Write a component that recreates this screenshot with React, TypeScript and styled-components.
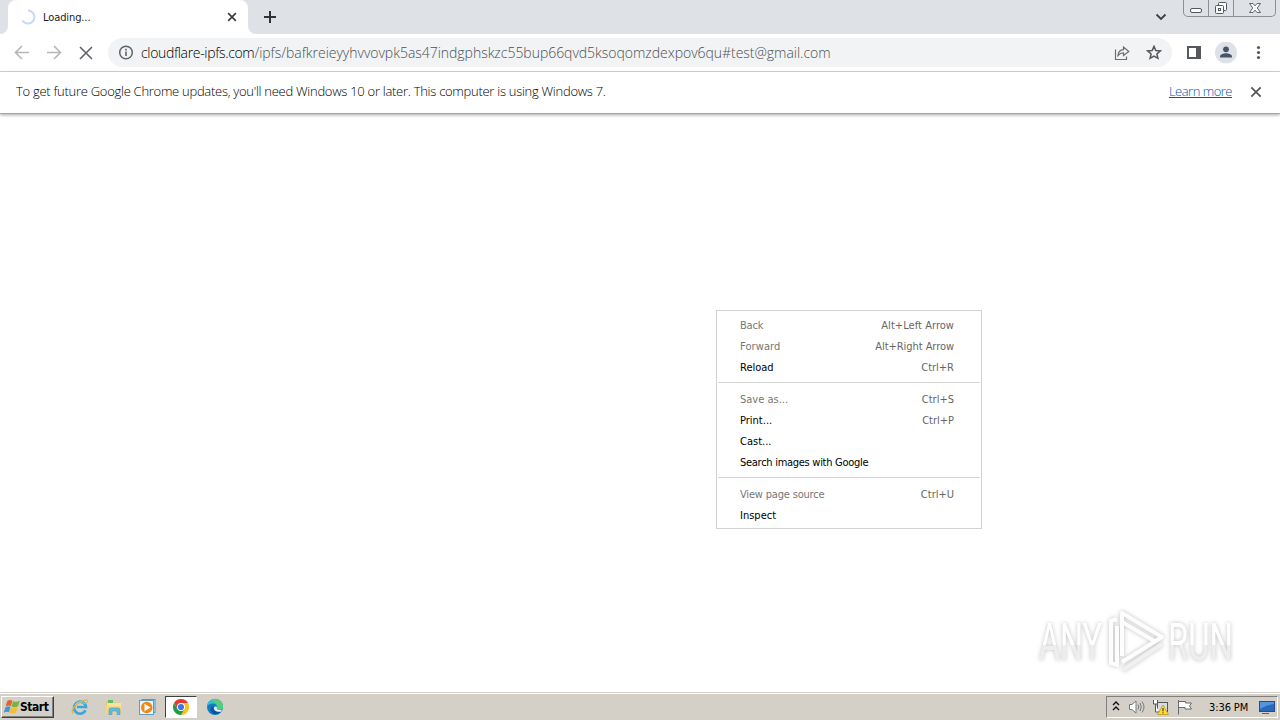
import styled, {createGlobalStyle} from 'styled-components'

const GlobalStyle = createGlobalStyle`
    * {
        box-sizing: border-box;
    }
    body {
        margin: 0;
        background: #ffffff;
        overflow: hidden;
        font-family: 'DejaVu Sans Condensed', 'DejaVu Sans', Tahoma, sans-serif;
        font-size: 11px;
        color: #202124;
    }
    svg {
        display: block;
        flex: none;
    }
`
const Screen = styled.div`
    width: 1280px;
    height: 720px;
    display: flex;
    flex-direction: column;
    overflow: hidden;
`
const Text = styled.span<{$spacing?: number}>`
    white-space: pre;
    letter-spacing: ${({$spacing}) => $spacing ?? 0}px;
`

/* browser frame */
const TabStrip = styled.div`
    height: 34px;
    flex: none;
    display: flex;
    background: #dee1e6;
`
const TabEdge = styled.div<{$side: 'left' | 'right'}>`
    width: 8px;
    background: #ffffff;
    &::before {
        content: '';
        display: block;
        height: 34px;
        background: #dee1e6;
        border-bottom-${({$side}) => ($side === 'left' ? 'right' : 'left')}-radius: 8px;
    }
`
const TabSlot = styled.div`
    width: 240px;
    display: flex;
    background: #dee1e6;
`
const Tab = styled.div`
    width: 240px;
    padding: 0 9px 0 12px;
    display: flex;
    align-items: center;
    background: #ffffff;
    border-radius: 8px 8px 0 0;
`
const TabTitle = styled(Text)`
    flex: 1;
    margin-left: 7px;
`
const NewTab = styled.div`
    margin: 10px 0 0 8px;
`
const WindowTools = styled.div`
    margin-left: auto;
    padding-right: 4px;
    display: flex;
`
const TabSearch = styled.div`
    margin: 11px 16px 0 0;
`
const Caption = styled.div`
    width: 93px;
    height: 17px;
    display: flex;
    border: 1px solid #8c8f94;
    border-top: 0;
    border-radius: 0 0 5px 5px;
`
const CaptionButton = styled.div<{$width: number}>`
    width: ${({$width}) => $width}px;
    display: flex;
    justify-content: center;
    border-right: 1px solid #8c8f94;
    &:last-child {
        border-right: 0;
    }
`
const Toolbar = styled.div`
    height: 38px;
    flex: none;
    display: flex;
    align-items: center;
    padding: 0 12px 0 14px;
    border-bottom: 1px solid #d5d7da;
`
const NavButtons = styled.div`
    width: 94px;
    display: flex;
    gap: 16px;
`
const AddressBar = styled.div`
    width: 1064px;
    height: 29px;
    padding: 0 10px;
    display: flex;
    align-items: center;
    border-radius: 15px;
    background: #f1f3f4;
`
const Url = styled.div`
    flex: 1;
    margin-left: 7px;
    padding-top: 1px;
    font-family: 'Open Sans', 'Noto Sans', sans-serif;
    font-size: 14px;
    line-height: 20px;
    color: #4b4f54;
    font-weight: 300;
`
const Host = styled(Text)`
    color: #000000;
`
const AddressActions = styled.div`
    display: flex;
    gap: 16px;
`
const Profile = styled.div`
    display: flex;
    align-items: center;
    margin-left: 14px;
    gap: 13px;
`
const InfoBar = styled.div`
    height: 42px;
    flex: none;
    display: flex;
    align-items: center;
    padding: 0 18px 2px 16px;
    border-bottom: 1px solid #a5a5a5;
    box-shadow: 0 1px 3px rgba(0, 0, 0, 0.35);
    font-family: 'Open Sans', 'Noto Sans', sans-serif;
    font-size: 13px;
    font-weight: 300;
    color: #000000;
`
const InfoText = styled(Text)`
    padding-bottom: 2px;
`
const LearnMore = styled(InfoText)`
    margin: 0 18px 0 auto;
    color: #0057b0;
    text-decoration: underline;
`
const Page = styled.div`
    flex: 1;
    position: relative;
`

/* context menu */
const Menu = styled.div`
    position: absolute;
    left: 716px;
    top: 196px;
    width: 266px;
    height: 219px;
    padding: 4px 1px;
    border: 1px solid #d2d2d2;
    background: #ffffff;
`
const MenuRow = styled.div<{$disabled?: boolean}>`
    height: 21px;
    padding: 0 26px 0 22px;
    display: flex;
    align-items: center;
    justify-content: space-between;
    color: ${({$disabled}) => ($disabled ? '#767676' : '#000000')};
`
const Shortcut = styled(Text)`
    color: #666666;
`
const Separator = styled.div`
    height: 1px;
    margin: 4px 0 6px;
    background: #d5d5d5;
`
const Watermark = styled.svg`
    position: absolute;
    left: 1020px;
    top: 487px;
    overflow: visible;
    filter: drop-shadow(0 0 2px rgba(0, 0, 0, 0.25));
`

/* taskbar */
const Taskbar = styled.div`
    height: 28px;
    flex: none;
    display: flex;
    align-items: center;
    padding-top: 1px;
    background: #d4d0c8;
    border-top: 1px solid #d4d0c8;
    box-shadow: inset 0 1px 0 #ffffff;
`
const StartButton = styled.div`
    width: 53px;
    height: 22px;
    margin-left: 1px;
    padding-left: 2px;
    display: flex;
    align-items: center;
    border: 1px solid;
    border-color: #ffffff #404040 #404040 #ffffff;
    box-shadow: inset -1px -1px 0 #808080;
    color: #000000;
    font-weight: bold;
    font-size: 12px;
`
const QuickLaunch = styled.div`
    margin-left: 9px;
    display: flex;
    align-items: center;
`
const Launcher = styled.div<{$active?: boolean}>`
    width: ${({$active}) => ($active ? 32 : 34)}px;
    height: 22px;
    display: flex;
    align-items: center;
    justify-content: center;
    border: 1px solid;
    border-color: ${({$active}) => ($active ? '#404040 #ffffff #ffffff #404040' : 'transparent')};
    background: ${({$active}) => ($active ? '#ffffff' : 'transparent')};
    &:last-child {
        margin-left: 1px;
    }
`
const Tray = styled.div`
    width: 172px;
    height: 22px;
    margin: 0 2px 0 auto;
    padding: 0 1px 0 5px;
    display: flex;
    align-items: center;
    border: 1px solid;
    border-color: #808080 #ffffff #ffffff #808080;
    color: #000000;
`
const TrayIcons = styled.div`
    width: 97px;
    display: flex;
    align-items: center;
    gap: 8px;
`
const Clock = styled(Text)`
    width: 50px;
`

type MenuItem = {label: string; spacing?: number; keys?: string; keySpacing?: number; disabled?: boolean}

const MENU: MenuItem[][] = [
    [
        {label: 'Back', spacing: -0.2, keys: 'Alt+Left Arrow', keySpacing: 0.05, disabled: true},
        {label: 'Forward', spacing: 0.1, keys: 'Alt+Right Arrow', keySpacing: -0.05, disabled: true},
        {label: 'Reload', keys: 'Ctrl+R'},
    ],
    [
        {label: 'Save as...', keys: 'Ctrl+S', disabled: true},
        {label: 'Print...', keys: 'Ctrl+P'},
        {label: 'Cast...'},
        {label: 'Search images with Google', spacing: -0.28},
    ],
    [{label: 'View page source', spacing: -0.18, keys: 'Ctrl+U', disabled: true}, {label: 'Inspect'}],
]

const Cross = ({size = 16, reach = 4, color = '#3c4043', width = 1.6}) => (
    <svg width={size} height={size} viewBox="-8 -8 16 16">
        <path d={`M-${reach} -${reach}L${reach} ${reach}M${reach} -${reach}L-${reach} ${reach}`} stroke={color} strokeWidth={width} />
    </svg>
)

const Arrow = ({flip = false}) => (
    <svg width="16" height="16" viewBox="0 0 16 16" fill="none" stroke="#b4b6b9" strokeWidth="1.6">
        <path d={flip ? 'M1 7.5H14M8 1L14.5 7.5L8 14' : 'M15 7.5H2M8 1L1.5 7.5L8 14'} />
    </svg>
)

const InternetExplorer = () => (
    <svg width="18" height="18" viewBox="0 0 18 18" fill="none">
        <path d="M14.5 12.2A6 6 0 1 1 15 9H6" stroke="#3ca6dc" strokeWidth="2.6" />
        <path d="M4 7C6 3.3 11 2.5 14 6" stroke="#8ed6f4" strokeWidth="1" />
        <path d="M2 15.5C-1 12.5 5 5.5 12 2.5C15.5 1 17.5 2 15.8 5" stroke="#e5b53a" strokeWidth="1.3" />
    </svg>
)

const Explorer = () => (
    <svg width="18" height="18" viewBox="0 0 18 18">
        <path d="M1 3H6L7 4.5H15V14H1Z" fill="#e6c766" />
        <path d="M3 2H8V5H3Z" fill="#65b96b" />
        <path d="M2 5H16V12H2Z" fill="#f7e4a0" />
        <path d="M1 8H15L16 10V15H1Z" fill="#f3d77c" />
        <path d="M4 16.5V11.5C4 10.5 5 10 6 10H13C14.5 10 15 11 15 12V16.5H12V13H7V16.5Z" fill="#65b8df" stroke="#459bca" strokeWidth=".6" />
    </svg>
)

const MediaPlayer = () => (
    <svg width="18" height="18" viewBox="0 0 18 18">
        <rect x="3" y="1.5" width="13" height="13" fill="#c5e5f4" stroke="#519ac1" />
        <rect x=".5" y="2.5" width="14" height="14" fill="#eaf5fb" stroke="#5c9ec5" />
        <circle cx="7.7" cy="9.5" r="5.7" fill="#f28718" />
        <path d="M5.5 5.8L11.5 9.5L5.5 13.2Z" fill="#ffffff" />
    </svg>
)

const Chrome = () => (
    <svg width="16" height="16" viewBox="-8 -8 16 16">
        <path d="M0 0L-6.93 -4A8 8 0 0 1 6.93 -4Z" fill="#e33b2e" />
        <path d="M0 0V-4H6.93A8 8 0 0 1 0 8Z" fill="#fbc116" />
        <path d="M0 0L3.46 2L0 8A8 8 0 0 1 -6.93 -4L-3.46 2Z" fill="#229b49" />
        <path d="M-6.93 -4L-3.46 2L0 0V-4Z" fill="#e33b2e" />
        <circle r="4" fill="#ffffff" />
        <circle r="3.1" fill="#3979e8" />
    </svg>
)

const Edge = () => (
    <svg width="18" height="18" viewBox="0 0 18 18">
        <circle cx="9" cy="9" r="8" fill="#137ac4" />
        <path d="M1 9A8 8 0 0 1 17 8.5C17 11.5 14.5 12.5 11 11.4C12 8 10 5.5 7 5.5C4 5.5 1.5 7 1 9Z" fill="#37bed1" />
        <path d="M9 1A8 8 0 0 1 17 8.5C17 11.5 14.5 12.5 11 11.4C12 8 11 5 5 2.3C6 1.5 7.5 1 9 1Z" fill="#57cd79" />
        <path d="M7.8 8.3C6.5 11 9 14 14.8 13.6C12 17.5 6.5 17 5 13C4 10 6 8 7.8 8.3Z" fill="#0b559b" />
        <path d="M8 9.3C8.5 8.3 10.6 8.3 11 9.5C10 11.5 12.5 12.8 16 11.7L14.8 13.7C10.5 14.4 7 12 8 9.3Z" fill="#e7eeee" />
    </svg>
)

const WindowsFlag = () => (
    <svg width="16" height="16" viewBox="0 0 17 16">
        <path d="M3.5 1.5C5.5 .2 7.5.4 9 1.3L7.3 7C5.5 6.1 4 6.1 1.8 7.2Z" fill="#e3632c" />
        <path d="M9.6 1.8C11.5 2.8 14 2.8 16.8 1.4L14.9 7.3C12.3 8.5 10 8.5 7.9 7.5Z" fill="#7bb342" />
        <path d="M1.5 8.2C4 7 5.5 7.1 7 7.9L5.3 13.6C3.8 12.6 2 12.8-.2 13.9Z" fill="#4495d5" />
        <path d="M7.6 8.4C9.6 9.4 12 9.4 14.6 8.3L12.8 14.1C10.3 15.2 8.3 15.1 5.9 14.1Z" fill="#f3bd35" />
    </svg>
)

function BrowserTabs() {
    return (
        <TabStrip>
            <TabEdge $side="left" />
            <TabSlot>
                <Tab>
                    <svg width="16" height="34" viewBox="0 0 16 34" fill="none">
                        <path d="M8 10.5A6.5 6.5 0 1 1 2.4 20.5" stroke="#c9d7fa" strokeWidth="2" />
                    </svg>
                    <TabTitle $spacing={-0.1}>Loading...</TabTitle>
                    <Cross size={14} reach={4.4} width={2} />
                </Tab>
            </TabSlot>
            <TabEdge $side="right" />
            <NewTab>
                <svg width="13" height="13" viewBox="0 0 13 13">
                    <path d="M6 1V13M0 7H12" stroke="#303236" strokeWidth="2" />
                </svg>
            </NewTab>
            <WindowTools>
                <TabSearch>
                    <svg width="12" height="12" viewBox="0 0 12 12">
                        <path d="M1.5 3.5L6 8L10.5 3.5" fill="none" stroke="#3c4043" strokeWidth="1.8" />
                    </svg>
                </TabSearch>
                <Caption>
                    <CaptionButton $width={25}>
                        <svg width="14" height="16" viewBox="0 0 14 16">
                            <rect x="1.5" y="8.5" width="11" height="4" rx="1.5" fill="#fafafa" stroke="#55585d" />
                        </svg>
                    </CaptionButton>
                    <CaptionButton $width={25}>
                        <svg width="14" height="16" viewBox="0 0 14 16" fill="#fafafa" stroke="#55585d">
                            <rect x="4.5" y="2.5" width="8" height="8" rx="1" />
                            <rect x="1.5" y="5.5" width="8" height="8" rx="1" />
                            <rect x="4.5" y="8.5" width="2" height="2" />
                        </svg>
                    </CaptionButton>
                    <CaptionButton $width={41}>
                        <svg width="14" height="16" viewBox="0 0 14 16">
                            <path d="M1.5 3.5H5L7 5.8L9 3.5H12.5L9.3 8L12.5 12.5H9L7 10.2L5 12.5H1.5L4.7 8Z" fill="#fafafa" stroke="#62656a" />
                        </svg>
                    </CaptionButton>
                </Caption>
            </WindowTools>
        </TabStrip>
    )
}

function App() {
    return (
        <Screen>
            <GlobalStyle />
            <BrowserTabs />
            <Toolbar>
                <NavButtons>
                    <Arrow />
                    <Arrow flip />
                    <Cross reach={6} width={1.6} color="#5f6368" />
                </NavButtons>
                <AddressBar>
                    <svg width="16" height="16" viewBox="0 0 16 16" fill="none" stroke="#5f6368">
                        <circle cx="8" cy="7.5" r="6.3" strokeWidth="1.5" />
                        <path d="M8 6.5V11M8 3.8V5.5" strokeWidth="1.6" />
                    </svg>
                    <Url>
                        <Host $spacing={-0.34}>cloudflare-ipfs.com</Host>
                        <Text $spacing={-0.03}>/ipfs/bafkreieyyhvvovpk5as47indgphskzc55bup66qvd5ksoqomzdexpov6qu#test@gmail.com</Text>
                    </Url>
                    <AddressActions>
                        <svg width="16" height="16" viewBox="0 0 16 16" fill="none" stroke="#6b6e73" strokeWidth="1.2">
                            <path d="M1.5 4.5V14.5H12.5V11.5" />
                            <path d="M4 10.5C4.3 7 6.3 5 9.5 4.7V2L14.8 6.5L9.5 10.5V7.9C7 7.9 5.5 8.7 4 10.5Z" />
                        </svg>
                        <svg width="16" height="16" viewBox="0 0 16 16">
                            <path d="M8 1.3L9.8 5.5L14.3 5.9L10.9 8.9L11.9 13.3L8 11L4.1 13.3L5.1 8.9L1.7 5.9L6.2 5.5Z" fill="none" stroke="#54575c" strokeWidth="1.5" />
                        </svg>
                    </AddressActions>
                </AddressBar>
                <Profile>
                    <svg width="16" height="16" viewBox="0 0 16 16">
                        <path d="M1 1H15V14H1ZM3 3V12H10V3Z" fill="#55585d" fillRule="evenodd" />
                    </svg>
                    <svg width="22" height="22" viewBox="0 0 22 22">
                        <circle cx="11" cy="10.5" r="11" fill="#dee1e6" />
                        <circle cx="11" cy="7.3" r="2.9" fill="#48546b" />
                        <path d="M5 15.5V14.5C5 12 9 11.2 11 11.2S17 12 17 14.5V15.5Z" fill="#48546b" />
                    </svg>
                    <svg width="18" height="16" viewBox="0 0 18 16" fill="#55585d">
                        <circle cx="8.5" cy="2.5" r="1.6" />
                        <circle cx="8.5" cy="7.5" r="1.6" />
                        <circle cx="8.5" cy="12.5" r="1.6" />
                    </svg>
                </Profile>
            </Toolbar>
            <InfoBar>
                <InfoText $spacing={-0.28}>To get future Google Chrome updates, you'll need Windows 10 or later. This computer is using Windows 7.</InfoText>
                <LearnMore $spacing={-0.5}>Learn more</LearnMore>
                <Cross size={12} reach={6.3} width={2.4} color="#55585d" />
            </InfoBar>
            <Page>
                <Menu>
                    {MENU.map((group, index) => (
                        <div key={index}>
                            {index > 0 && <Separator />}
                            {group.map((item) => (
                                <MenuRow key={item.label} $disabled={item.disabled}>
                                    <Text $spacing={item.spacing}>{item.label}</Text>
                                    {item.keys && <Shortcut $spacing={item.keySpacing}>{item.keys}</Shortcut>}
                                </MenuRow>
                            ))}
                        </div>
                    ))}
                </Menu>
                <Watermark width="230" height="80" viewBox="0 0 230 80">
                    <defs>
                        <linearGradient id="shine" x1="0" y1="0" x2="0" y2="1">
                            <stop offset="54%" stopColor="#ffffff" />
                            <stop offset="54%" stopColor="#eeeeee" />
                        </linearGradient>
                    </defs>
                    <g fill="url(#shine)" fontFamily="Roboto, sans-serif" fontSize="51">
                        <text x="19" y="59" textLength="63" lengthAdjust="spacingAndGlyphs">ANY</text>
                        <text x="148" y="59" textLength="65" lengthAdjust="spacingAndGlyphs">RUN</text>
                    </g>
                    <g fill="none" stroke="#fdfdfd" strokeWidth="4" strokeLinejoin="round">
                        <path d="M102 55V12L142 36L102 61" />
                        <path d="M97 18L91 20V62L97 64V25" />
                        <path d="M103 69L142 43" stroke="#f0f0f0" />
                        <path d="M102 21L136 41" />
                    </g>
                </Watermark>
            </Page>
            <Taskbar>
                <StartButton>
                    <WindowsFlag />
                    <Text $spacing={-0.45}>Start</Text>
                </StartButton>
                <QuickLaunch>
                    <Launcher><InternetExplorer /></Launcher>
                    <Launcher><Explorer /></Launcher>
                    <Launcher><MediaPlayer /></Launcher>
                    <Launcher $active><Chrome /></Launcher>
                    <Launcher><Edge /></Launcher>
                </QuickLaunch>
                <Tray>
                    <TrayIcons>
                        <svg width="8" height="12" viewBox="0 0 8 12" fill="none" stroke="#111111" strokeWidth="1.4">
                            <path d="M1 4L4 1L7 4M1 9L4 6L7 9" />
                        </svg>
                        <svg width="17" height="16" viewBox="0 0 17 16" fill="none" stroke="#77797c">
                            <path d="M1.5 5.5H4L8 2V14L4 10.5H1.5Z" fill="#ffffff" />
                            <path d="M10 5.5Q11.5 8 10 10.5M12 4Q14.5 8 12 12M14 2.5Q18 8 14 13.5" />
                        </svg>
                        <svg width="17" height="16" viewBox="0 0 17 16">
                            <rect x="4.5" y="3.5" width="10" height="9" fill="#d7dce0" stroke="#55585d" />
                            <path d="M.5 1V5H4.5V1M2.5 5V13H6" fill="#ffffff" stroke="#55585d" />
                            <path d="M10 6L15.5 15.5H4.5Z" fill="#ffdc35" stroke="#b79308" strokeWidth=".7" />
                            <path d="M10 9V12.3M10 13.3V14.4" stroke="#222222" />
                        </svg>
                        <svg width="16" height="16" viewBox="0 0 16 16">
                            <path d="M.5 1V15.5M1 2.5H7.5V4H13.5L11.5 7L13.5 10H7V8.5H1" fill="#ffffff" stroke="#66696d" />
                        </svg>
                    </TrayIcons>
                    <Clock $spacing={-0.1}>3:36 PM</Clock>
                    <svg width="16" height="16" viewBox="0 0 16 16">
                        <rect x=".5" y="2.5" width="15" height="10" fill="#2869bd" stroke="#254e88" />
                        <path d="M1 3H15V5Q8 6 1 10Z" fill="#5595dc" />
                        <path d="M3 14.5H10" stroke="#4f6380" />
                    </svg>
                </Tray>
            </Taskbar>
        </Screen>
    )
}

export default App
